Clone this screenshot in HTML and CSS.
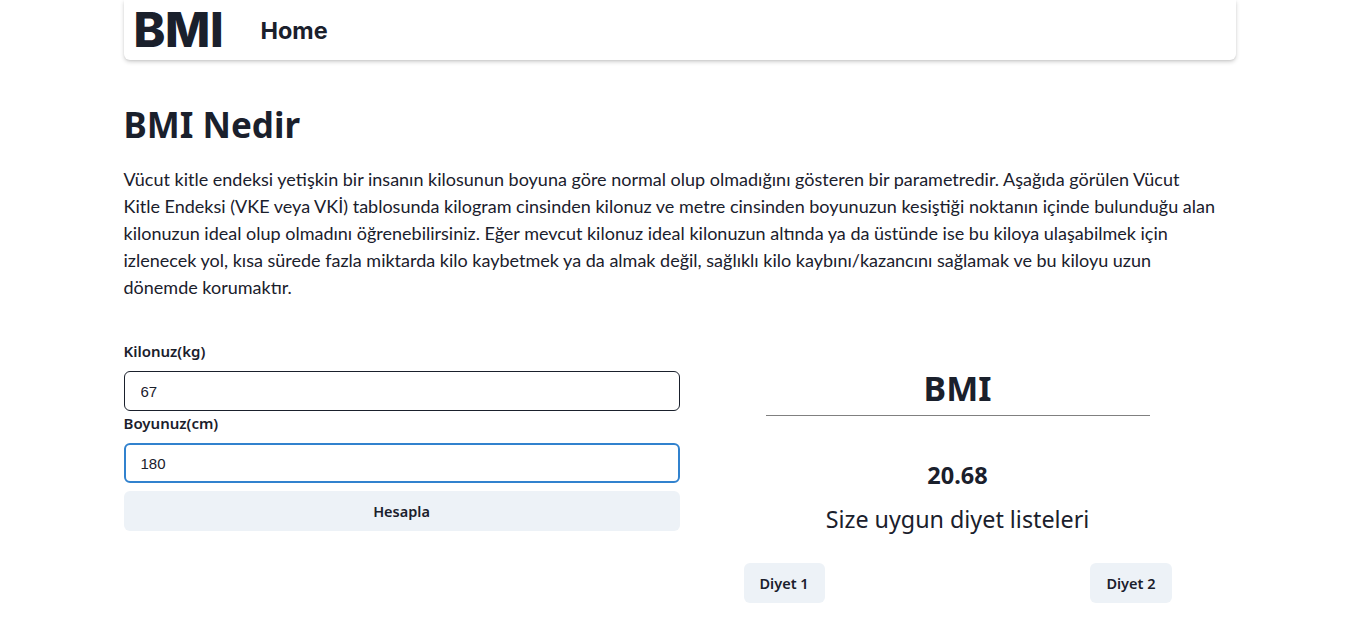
FILE: index.html
```html
<!DOCTYPE html>
<html lang="tr">
<head>
<meta charset="utf-8">
<title>BMI</title>
<link rel="stylesheet" href="styles.css">
</head>
<body>
<div class="page">
  <nav class="navbar">
    <span class="brand">BMI</span>
    <a class="nav-link" href="#">Home</a>
  </nav>
  <main class="main">
    <h1 class="title">BMI Nedir</h1>
    <p class="intro">Vücut kitle endeksi yetişkin bir insanın kilosunun boyuna göre normal olup olmadığını gösteren bir parametredir. Aşağıda görülen Vücut<br>Kitle Endeksi (VKE veya VKİ) tablosunda kilogram cinsinden kilonuz ve metre cinsinden boyunuzun kesiştiği noktanın içinde bulunduğu alan<br>kilonuzun ideal olup olmadını öğrenebilirsiniz. Eğer mevcut kilonuz ideal kilonuzun altında ya da üstünde ise bu kiloya ulaşabilmek için<br>izlenecek yol, kısa sürede fazla miktarda kilo kaybetmek ya da almak değil, sağlıklı kilo kaybını/kazancını sağlamak ve bu kiloyu uzun<br>dönemde korumaktır.</p>
    <div class="grid">
      <form class="form">
        <label class="label" for="kg">Kilonuz(kg)</label>
        <input class="input" id="kg" type="text" value="67">
        <label class="label" for="cm">Boyunuz(cm)</label>
        <input class="input focused" id="cm" type="text" value="180">
        <button class="btn btn-block" type="button">Hesapla</button>
      </form>
      <section class="result">
        <h2 class="result-title">BMI</h2>
        <hr class="divider">
        <div class="value">20.68</div>
        <div class="subtitle">Size uygun diyet listeleri</div>
        <div class="diets">
          <button class="btn btn-small" type="button">Diyet 1</button>
          <button class="btn btn-small" type="button">Diyet 2</button>
        </div>
      </section>
    </div>
  </main>
</div>
</body>
</html>
```
FILE: styles.css
```css
* { box-sizing: border-box; }
html, body { margin: 0; padding: 0; background: #fff; }
body {
  font-family: "Noto Sans", "Open Sans", sans-serif;
  color: #1a202c;
}
.page {
  width: 1112px;
  margin: 0 auto;
}
.navbar {
  height: 60px;
  display: flex;
  align-items: center;
  gap: 37px;
  padding: 0 10px;
  background: #fff;
  border-radius: 0 0 6px 6px;
  box-shadow: 0 2px 4px rgba(0,0,0,0.18), 0 1px 2px rgba(0,0,0,0.06);
}
.brand {
  font-family: Inter, "Noto Sans", sans-serif;
  font-weight: 800;
  font-size: 48px;
  letter-spacing: -0.3px;
  line-height: 1;
}
.nav-link {
  font-family: Inter, "Noto Sans", sans-serif;
  font-weight: 700;
  font-size: 23.4px;
  color: #1a202c;
  text-decoration: none;
}
.main { padding-top: 44px; }
.title {
  margin: 0;
  font-size: 35px;
  font-weight: 700;
  line-height: 1.2;
}
.intro {
  margin: 20px 0 0;
  font-family: Lato, "Noto Sans", sans-serif;
  font-size: 18px;
  line-height: 27px;
}
.grid {
  display: grid;
  grid-template-columns: 1fr 1fr;
  margin-top: 38px;
}
.form {
  display: flex;
  flex-direction: column;
}
.label {
  font-size: 15px;
  font-weight: 600;
  line-height: 24px;
  margin-bottom: 8px;
}
.input {
  height: 40px;
  width: 100%;
  border: 1px solid #1a202c;
  border-radius: 6px;
  padding: 0 16px;
  font-family: "Liberation Sans", Arial, sans-serif;
  font-size: 15px;
  color: #1a202c;
  background: #fff;
  outline: none;
}
.input.focused {
  border: 2px solid #3182ce;
  padding: 0 15px;
}
.btn {
  height: 40px;
  border: none;
  border-radius: 6px;
  background: #edf2f7;
  color: #1a202c;
  font-family: "Noto Sans", sans-serif;
  font-weight: 600;
  font-size: 14.5px;
  cursor: pointer;
}
.btn-block { width: 100%; margin-top: 8px; }
.result {
  display: flex;
  flex-direction: column;
  align-items: center;
  padding-top: 29px;
}
.result-title {
  margin: 0;
  font-size: 34px;
  font-weight: 700;
  line-height: 1.2;
}
.divider {
  width: 384px;
  margin: 6px 0 0;
  border: none;
  border-top: 1px solid #808080;
}
.value {
  margin-top: 43px;
  font-size: 23.5px;
  font-weight: 700;
  line-height: 32px;
}
.subtitle {
  margin-top: 12px;
  font-size: 23.3px;
  line-height: 32px;
}
.diets {
  align-self: stretch;
  display: flex;
  justify-content: space-between;
  padding: 0 64px;
  margin-top: 28px;
}
.btn-small { padding: 0 16px; }
```
